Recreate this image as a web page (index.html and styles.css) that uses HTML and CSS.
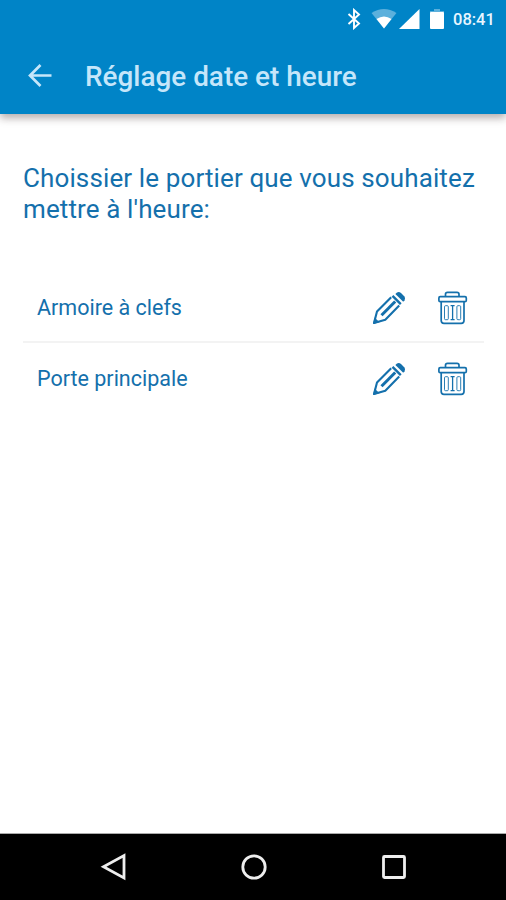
FILE: index.html
```html
<!DOCTYPE html>
<html lang="fr">
<head>
<meta charset="UTF-8">
<meta name="viewport" content="width=device-width, initial-scale=1.0">
<title>Réglage date et heure</title>
<link rel="stylesheet" href="styles.css">
</head>
<body>

<svg class="symbols">
    <symbol id="pencil" viewBox="0 0 34 34">
        <path d="M19.2 6.2L5 20.5L2 32L13.3 28.7L27.2 14.5" fill="none" stroke="currentColor" stroke-width="2.1" stroke-linejoin="round"/>
        <path d="M1 33L2.6 26.5L7.5 31.2Z" fill="currentColor"/>
        <path d="M9.5 24.2L23.2 10.5" fill="none" stroke="currentColor" stroke-width="3"/>
        <path d="M20.5 4.8L28.8 13.1" stroke="currentColor" stroke-width="2.4"/>
        <path d="M23.4 3L25 1.4Q27 .2 29 2L32.2 5.2Q34 7.2 32.6 9.2L31.2 10.7Z" fill="currentColor"/>
    </symbol>
    <symbol id="trash" viewBox="0 0 30 34">
        <g fill="none" stroke="currentColor" stroke-width="1.7">
            <path d="M7.5 5.5V3.2Q7.5 1.3 9.5 1.3H19Q21 1.3 21 3.2V5.5"/>
            <rect x=".9" y="5.7" width="27.4" height="5" rx="1.3"/>
            <path d="M3.2 10.7V29.5Q3.2 32.3 6 32.3H23.2Q26 32.3 26 29.5V10.7"/>
        </g>
        <g fill="none" stroke="currentColor" stroke-width=".9">
            <rect x="6.5" y="14.7" width="3.8" height="14" rx="1"/>
            <path d="M12.6 14.7H16.6M14.6 14.7V28.7M12.6 28.7H16.6" stroke-width="1.3"/>
            <rect x="18.9" y="14.7" width="3.8" height="14" rx="1"/>
        </g>
    </symbol>
</svg>

<div class="screen">
    <header class="header">
        <div class="status-bar">
            <svg class="bluetooth" width="14" height="22" viewBox="0 0 14 22">
                <path d="M1.5 6L12 15.5L7 20V2L12 6.5L1.5 16" fill="none" stroke="#fff" stroke-width="1.9"/>
            </svg>
            <svg class="wifi" width="26" height="20" viewBox="0 0 26 20">
                <path d="M0.5 4Q13 -4 25.5 4L13 19.5Z" fill="#5cb0dc"/>
                <path d="M5.5 10Q13 5 20.5 10L13 19.5Z" fill="#fff"/>
            </svg>
            <svg class="signal" width="21" height="20" viewBox="0 0 21 20">
                <path d="M0 20L20.5 0V20Z" fill="#fff"/>
            </svg>
            <svg class="battery" width="14" height="20" viewBox="0 0 14 20">
                <path d="M4 0H10V2H14V5H0V2H4Z" fill="#5cb0dc"/>
                <rect y="3" width="14" height="17" rx="1" fill="#fff"/>
            </svg>
            <span class="time">08:41</span>
        </div>
        <div class="title-bar">
            <svg class="back" width="24" height="24" viewBox="0 0 24 24">
                <path d="M23.5 11.5H2M12.5 1L2 11.5L12.5 22" fill="none" stroke="#c5e6fa" stroke-width="2.7"/>
            </svg>
            <h1 class="title">Réglage date et heure</h1>
        </div>
    </header>

    <main class="content">
        <p class="intro">Choissier le portier que vous souhaitez mettre à l'heure:</p>
        <ul class="portiers">
            <li class="portier">
                <span class="nom">Armoire à clefs</span>
                <svg class="icon-pencil"><use href="#pencil"/></svg>
                <svg class="icon-trash"><use href="#trash"/></svg>
            </li>
            <li class="portier">
                <span class="nom">Porte principale</span>
                <svg class="icon-pencil"><use href="#pencil"/></svg>
                <svg class="icon-trash"><use href="#trash"/></svg>
            </li>
        </ul>
    </main>

    <nav class="nav-bar">
        <svg width="28" height="28" viewBox="0 0 28 28"><path d="M24 2.5V25L3.5 13.7Z"/></svg>
        <svg width="28" height="28" viewBox="0 0 28 28"><circle cx="14" cy="14" r="11.2"/></svg>
        <svg width="28" height="28" viewBox="0 0 28 28"><rect x="3.5" y="3.5" width="21" height="21" rx="1"/></svg>
    </nav>
</div>

</body>
</html>
```
FILE: styles.css
```css
body, html {
    margin: 0;
    padding: 0;
    height: 100%;
    font-family: Roboto, 'Liberation Sans', sans-serif;
    background-color: #fff;
}
.symbols {
    display: none;
}
.screen {
    display: flex;
    flex-direction: column;
    height: 100%;
}
.header {
    height: 114px;
    background-color: #0084c7;
    box-shadow: 0 4px 8px rgba(40, 20, 20, 0.35);
}
.status-bar {
    display: flex;
    justify-content: flex-end;
    align-items: center;
    height: 37px;
    padding-right: 10px;
}
.wifi {
    margin-left: 10px;
}
.signal {
    margin-left: 2px;
}
.battery {
    margin-left: 10px;
}
.time {
    width: 43px;
    margin-left: 9px;
    padding-top: 1px;
    font-size: 16.5px;
    font-weight: 500;
    color: #e8f6ff;
    white-space: nowrap;
}
.title-bar {
    display: flex;
    align-items: center;
    height: 77px;
    padding-left: 28px;
}
.title {
    margin: 1px 0 0 33px;
    font-size: 27.9px;
    font-weight: 500;
    color: #c5e6fa;
}
.content {
    flex: 1;
    padding: 49px 22px 0 23px;
    color: #1470ac;
}
.intro {
    margin: 0;
    font-size: 26px;
    line-height: 31px;
    letter-spacing: 0.12px;
}
.portiers {
    margin: 47px 0 0;
    padding: 0;
    list-style: none;
}
.portier {
    display: flex;
    align-items: center;
    height: 69px;
    padding: 2px 16px 0 14px;
    box-sizing: border-box;
}
.portier + .portier {
    height: 71px;
    border-top: 2px solid #f3f3f3;
}
.nom {
    flex: 1;
    font-size: 21.5px;
}
.icon-pencil {
    width: 34px;
    height: 34px;
}
.icon-trash {
    width: 30px;
    height: 34px;
    margin-left: 32px;
}
.nav-bar {
    display: flex;
    justify-content: center;
    align-items: center;
    gap: 112px;
    height: 66px;
    padding-left: 1px;
    border-top: 1px solid #aaa;
    background-color: #000;
}
.nav-bar svg {
    fill: none;
    stroke: #eee;
    stroke-width: 2.8;
}
```
